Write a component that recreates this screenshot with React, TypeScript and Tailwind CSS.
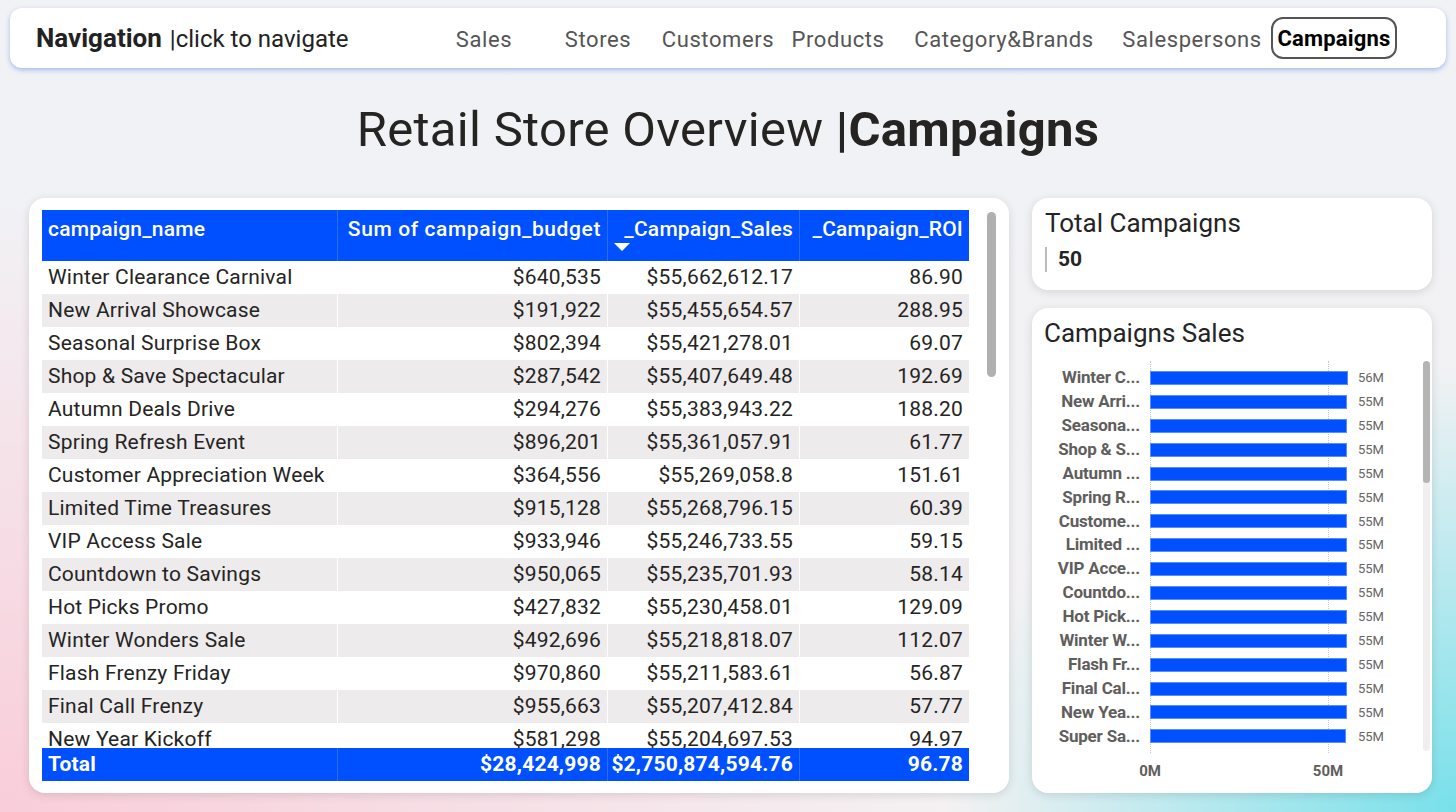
import React from "react";

type Row = { name: string; budget: string; sales: string; roi: string };

const rows: Row[] = [
  { name: "Winter Clearance Carnival", budget: "$640,535", sales: "$55,662,612.17", roi: "86.90" },
  { name: "New Arrival Showcase", budget: "$191,922", sales: "$55,455,654.57", roi: "288.95" },
  { name: "Seasonal Surprise Box", budget: "$802,394", sales: "$55,421,278.01", roi: "69.07" },
  { name: "Shop & Save Spectacular", budget: "$287,542", sales: "$55,407,649.48", roi: "192.69" },
  { name: "Autumn Deals Drive", budget: "$294,276", sales: "$55,383,943.22", roi: "188.20" },
  { name: "Spring Refresh Event", budget: "$896,201", sales: "$55,361,057.91", roi: "61.77" },
  { name: "Customer Appreciation Week", budget: "$364,556", sales: "$55,269,058.8", roi: "151.61" },
  { name: "Limited Time Treasures", budget: "$915,128", sales: "$55,268,796.15", roi: "60.39" },
  { name: "VIP Access Sale", budget: "$933,946", sales: "$55,246,733.55", roi: "59.15" },
  { name: "Countdown to Savings", budget: "$950,065", sales: "$55,235,701.93", roi: "58.14" },
  { name: "Hot Picks Promo", budget: "$427,832", sales: "$55,230,458.01", roi: "129.09" },
  { name: "Winter Wonders Sale", budget: "$492,696", sales: "$55,218,818.07", roi: "112.07" },
  { name: "Flash Frenzy Friday", budget: "$970,860", sales: "$55,211,583.61", roi: "56.87" },
  { name: "Final Call Frenzy", budget: "$955,663", sales: "$55,207,412.84", roi: "57.77" },
  { name: "New Year Kickoff", budget: "$581,298", sales: "$55,204,697.53", roi: "94.97" },
];

// bar chart: label, value in millions
const bars: [string, number, string][] = [
  ["Winter C...", 55.66, "56M"],
  ["New Arri...", 55.46, "55M"],
  ["Seasona...", 55.42, "55M"],
  ["Shop & S...", 55.41, "55M"],
  ["Autumn ...", 55.38, "55M"],
  ["Spring R...", 55.36, "55M"],
  ["Custome...", 55.27, "55M"],
  ["Limited ...", 55.27, "55M"],
  ["VIP Acce...", 55.25, "55M"],
  ["Countdo...", 55.24, "55M"],
  ["Hot Pick...", 55.23, "55M"],
  ["Winter W...", 55.22, "55M"],
  ["Flash Fr...", 55.21, "55M"],
  ["Final Cal...", 55.21, "55M"],
  ["New Yea...", 55.2, "55M"],
  ["Super Sa...", 55.19, "55M"],
];

const navItems: [string, string][] = [
  ["Sales", "w-[114px]"],
  ["Stores", "w-[114px]"],
  ["Customers", "w-[126px]"],
  ["Products", "w-[114px]"],
  ["Category&Brands", "w-[218px]"],
  ["Salespersons", "w-[158px]"],
];

const cols = "grid grid-cols-[295px_270px_192px_170px]";

const App: React.FC = () => {
  return (
    <div className="h-[812px] w-full overflow-hidden font-['Roboto',sans-serif] text-[#252423] bg-[radial-gradient(ellipse_65%_75%_at_0%_100%,#f9cdda_0%,rgba(249,205,218,0)_100%),radial-gradient(ellipse_35%_55%_at_100%_100%,#78e0ea_0%,rgba(120,224,234,0)_100%),linear-gradient(#f0f2f6,#f4f1f2)]">
      {/* navigation bar */}
      <div className="pt-2 px-[10px]">
        <div className="h-[60px] rounded-xl bg-white shadow-[0_2px_5px_rgba(70,120,220,0.45)] flex items-center pl-[26px]">
          <div className="w-[391px] flex items-baseline">
            <span className="text-[26px] font-bold text-[#222]">Navigation</span>
            <span className="text-[24px] ml-[8px] text-[#222]">|click to navigate</span>
          </div>
          {navItems.map(([label, w]) => (
            <div key={label} className={`${w} text-center text-[22px] tracking-[0.6px] text-[#555] pt-[2px] whitespace-nowrap`}>
              {label}
            </div>
          ))}
          <div className="w-[126px] h-[42px] rounded-xl border-2 border-[#555] flex items-center justify-center text-[22px] font-bold text-black tracking-[0.2px]">
            Campaigns
          </div>
        </div>
      </div>

      {/* title */}
      <div className="h-[130px] flex items-center justify-center pb-[6px]">
        <h1 className="text-[49px] tracking-[0.3px] text-[#252423]">
          Retail Store Overview <span className="font-bold">|Campaigns</span>
        </h1>
      </div>

      <div className="flex pl-[29px] gap-[23px]">
        {/* table card */}
        <div className="w-[980px] h-[595px] bg-white rounded-2xl shadow-[0_2px_10px_rgba(0,0,0,0.12)] pt-[12px] pl-[13px] flex">
          <div className="w-[927px] text-[21px] tracking-[0.2px]">
            <div className={`${cols} h-[51px] bg-[#0050ff] text-white font-medium`}>
              <div className="px-[6px] pt-[4px]">campaign_name</div>
              <div className="px-[6px] pt-[4px] border-l border-[#2a6cff] text-right whitespace-nowrap tracking-[0.6px]">Sum of campaign_budget</div>
              <div className="px-[6px] pt-[4px] border-l border-[#2a6cff] text-right relative">
                _Campaign_Sales
                <span className="absolute left-[6px] top-[33px] w-0 h-0 border-l-[8px] border-r-[8px] border-t-[8px] border-l-transparent border-r-transparent border-t-white" />
              </div>
              <div className="px-[6px] pt-[4px] border-l border-[#2a6cff] text-right">_Campaign_ROI</div>
            </div>
            <div className="h-[487px] overflow-hidden">
              {rows.map((r, i) => (
                <div
                  key={r.name}
                  className={`${cols} h-[33px] items-center ${i % 2 === 1 ? "bg-[#edebec]" : "bg-white"}`}
                >
                  <div className="px-[6px] whitespace-nowrap">{r.name}</div>
                  <div className="px-[6px] text-right h-full flex items-center justify-end border-l border-white">{r.budget}</div>
                  <div className="px-[6px] text-right h-full flex items-center justify-end border-l border-white">{r.sales}</div>
                  <div className="px-[6px] text-right h-full flex items-center justify-end border-l border-white">{r.roi}</div>
                </div>
              ))}
            </div>
            <div className={`${cols} h-[33px] items-center bg-[#0050ff] text-white font-bold`}>
              <div className="px-[6px]">Total</div>
              <div className="px-[6px] text-right h-full flex items-center justify-end border-l border-[#2a6cff]">$28,424,998</div>
              <div className="px-[6px] text-right h-full flex items-center justify-end border-l border-[#2a6cff]">$2,750,874,594.76</div>
              <div className="px-[6px] text-right h-full flex items-center justify-end border-l border-[#2a6cff]">96.78</div>
            </div>
          </div>
          <div className="ml-[18px] mt-[2px] w-[9px] h-[165px] rounded-full bg-[#b0b0b0]" />
        </div>

        {/* right column */}
        <div className="w-[400px] flex flex-col gap-[18px]">
          <div className="h-[92px] bg-white rounded-2xl shadow-[0_2px_10px_rgba(0,0,0,0.12)] pl-[13px] pt-[6px]">
            <div className="text-[26px] text-[#252423]">Total Campaigns</div>
            <div className="flex items-center mt-[1px]">
              <div className="w-[2px] h-[25px] bg-[#bbb]" />
              <div className="ml-[11px] text-[21px] font-bold text-[#252423]">50</div>
            </div>
          </div>

          <div className="h-[485px] bg-white rounded-2xl shadow-[0_2px_10px_rgba(0,0,0,0.12)] pl-[12px] pt-[6px] flex flex-col">
            <div className="text-[26px] text-[#252423]">Campaigns Sales</div>
            <div className="flex mt-[8px]">
              <div className="w-[367px] relative">
                {/* dotted gridlines */}
                <div className="absolute left-[106px] top-0 h-[392px] border-l border-dotted border-[#c8c8c8]" />
                <div className="absolute left-[284px] top-0 h-[392px] border-l border-dotted border-[#c8c8c8]" />
                <div className="pt-[5px]">
                  {bars.map(([label, v, txt]) => (
                    <div key={label} className="flex items-center h-[23.9px]">
                      <div className="w-[96px] text-right text-[17px] font-bold text-[#605e5c] whitespace-nowrap tracking-[-0.2px]">
                        {label}
                      </div>
                      <div className="ml-[10px] relative h-[14px] w-[250px]">
                        <div
                          className="h-full bg-[#0050ff] border border-[#5b8cff]"
                          style={{ width: `${(v / 50) * 178}px` }}
                        />
                      </div>
                      <div className="text-[13px] text-[#666] -ml-[42px]">{txt}</div>
                    </div>
                  ))}
                </div>
                <div className="relative h-[30px] mt-[12px] text-[15px] font-bold text-[#605e5c]">
                  <span className="absolute left-[106px] -translate-x-1/2">0M</span>
                  <span className="absolute left-[284px] -translate-x-1/2">50M</span>
                </div>
              </div>
              <div className="ml-[12px] w-[7px] h-[390px] rounded-full bg-[#f0eeee] relative">
                <div className="w-full h-[122px] rounded-full bg-[#b4b4b4]" />
              </div>
            </div>
          </div>
        </div>
      </div>
    </div>
  );
};

export default App;
